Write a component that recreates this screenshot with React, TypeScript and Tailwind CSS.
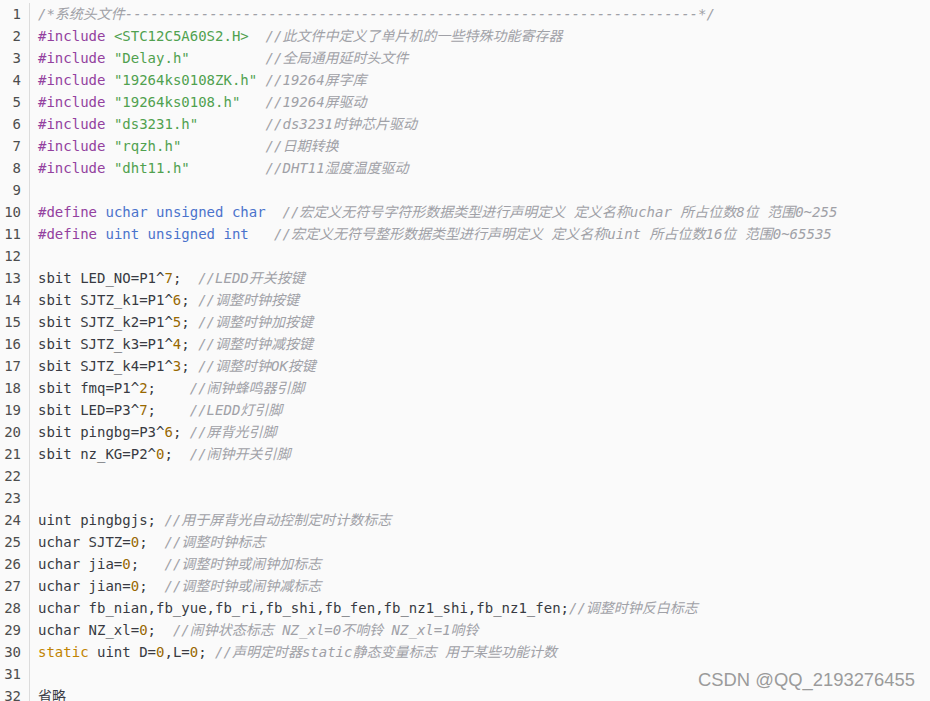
import React from "react";

type Seg = [string, string];

const C: Record<string, string> = {
  t: "text-[#383a42]",
  k: "text-[#93419f]",
  s: "text-[#50a14f]",
  b: "text-[#4a73cc]",
  n: "text-[#986801]",
  g: "text-[#c18401]",
  c: "text-[#a0a1a7] italic",
};

const dashes = "-".repeat(68);

const lines: Seg[][] = [
  [["c", "/*系统头文件" + dashes + "*/"]],
  [["k", "#include"], ["t", " "], ["s", "<STC12C5A60S2.H>"], ["t", "  "], ["c", "//此文件中定义了单片机的一些特殊功能寄存器"]],
  [["k", "#include"], ["t", " "], ["s", "\"Delay.h\""], ["t", "         "], ["c", "//全局通用延时头文件"]],
  [["k", "#include"], ["t", " "], ["s", "\"19264ks0108ZK.h\""], ["t", " "], ["c", "//19264屏字库"]],
  [["k", "#include"], ["t", " "], ["s", "\"19264ks0108.h\""], ["t", "   "], ["c", "//19264屏驱动"]],
  [["k", "#include"], ["t", " "], ["s", "\"ds3231.h\""], ["t", "        "], ["c", "//ds3231时钟芯片驱动"]],
  [["k", "#include"], ["t", " "], ["s", "\"rqzh.h\""], ["t", "          "], ["c", "//日期转换"]],
  [["k", "#include"], ["t", " "], ["s", "\"dht11.h\""], ["t", "         "], ["c", "//DHT11湿度温度驱动"]],
  [],
  [["k", "#define"], ["t", " "], ["b", "uchar unsigned char"], ["t", "  "], ["c", "//宏定义无符号字符形数据类型进行声明定义 定义名称uchar 所占位数8位 范围0~255"]],
  [["k", "#define"], ["t", " "], ["b", "uint unsigned int"], ["t", "   "], ["c", "//宏定义无符号整形数据类型进行声明定义 定义名称uint 所占位数16位 范围0~65535"]],
  [],
  [["t", "sbit LED_NO=P1^"], ["n", "7"], ["t", ";  "], ["c", "//LEDD开关按键"]],
  [["t", "sbit SJTZ_k1=P1^"], ["n", "6"], ["t", "; "], ["c", "//调整时钟按键"]],
  [["t", "sbit SJTZ_k2=P1^"], ["n", "5"], ["t", "; "], ["c", "//调整时钟加按键"]],
  [["t", "sbit SJTZ_k3=P1^"], ["n", "4"], ["t", "; "], ["c", "//调整时钟减按键"]],
  [["t", "sbit SJTZ_k4=P1^"], ["n", "3"], ["t", "; "], ["c", "//调整时钟OK按键"]],
  [["t", "sbit fmq=P1^"], ["n", "2"], ["t", ";    "], ["c", "//闹钟蜂鸣器引脚"]],
  [["t", "sbit LED=P3^"], ["n", "7"], ["t", ";    "], ["c", "//LEDD灯引脚"]],
  [["t", "sbit pingbg=P3^"], ["n", "6"], ["t", "; "], ["c", "//屏背光引脚"]],
  [["t", "sbit nz_KG=P2^"], ["n", "0"], ["t", ";  "], ["c", "//闹钟开关引脚"]],
  [],
  [],
  [["t", "uint pingbgjs; "], ["c", "//用于屏背光自动控制定时计数标志"]],
  [["t", "uchar SJTZ="], ["n", "0"], ["t", ";  "], ["c", "//调整时钟标志"]],
  [["t", "uchar jia="], ["n", "0"], ["t", ";   "], ["c", "//调整时钟或闹钟加标志"]],
  [["t", "uchar jian="], ["n", "0"], ["t", ";  "], ["c", "//调整时钟或闹钟减标志"]],
  [["t", "uchar fb_nian,fb_yue,fb_ri,fb_shi,fb_fen,fb_nz1_shi,fb_nz1_fen;"], ["c", "//调整时钟反白标志"]],
  [["t", "uchar NZ_xl="], ["n", "0"], ["t", ";  "], ["c", "//闹钟状态标志 NZ_xl=0不响铃 NZ_xl=1响铃"]],
  [["g", "static"], ["t", " uint D="], ["n", "0"], ["t", ",L="], ["n", "0"], ["t", "; "], ["c", "//声明定时器static静态变量标志 用于某些功能计数"]],
  [],
  [["t", "省略"]],
];

const mono = "font-['DejaVu_Sans_Mono','Noto_Sans_CJK_SC',monospace]";

export default function App() {
  return (
    <div className="relative w-[930px] h-[701px] overflow-hidden bg-[#fafafa]">
      <div className={`flex pt-[3px] text-[14px] leading-[22px] ${mono}`}>
        <div className="w-[30px] shrink-0 pr-[8px] border-r border-[#dcdcdc] text-right text-[#4d4d4d]">
          {lines.map((_, i) => (
            <div key={i} className="h-[22px]">
              {i + 1}
            </div>
          ))}
        </div>
        <div className="pl-[8px] whitespace-pre">
          {lines.map((segs, i) => (
            <div key={i} className="h-[22px]">
              {segs.length === 0
                ? " "
                : segs.map(([t, s], j) => (
                    <span key={j} className={C[t]}>
                      {s}
                    </span>
                  ))}
            </div>
          ))}
        </div>
      </div>
      <div className="absolute left-[698px] top-[671px] text-[18.4px] leading-none font-['Liberation_Sans',Arial,sans-serif] text-[#9b9b9b] whitespace-nowrap">
        CSDN @QQ_2193276455
      </div>
    </div>
  );
}
